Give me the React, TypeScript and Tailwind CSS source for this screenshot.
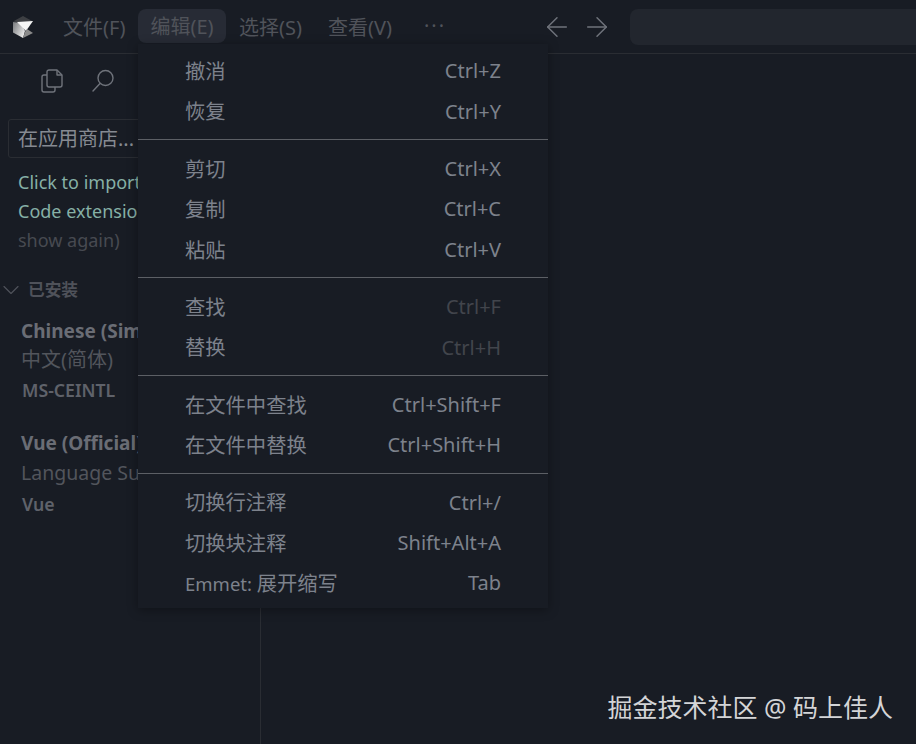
import { ArrowLeft, ArrowRight, ChevronDown } from "lucide-react";

const font = "font-['Noto_Sans','Noto_Sans_CJK_SC',sans-serif]";

type MenuItem = { label: string; keys: string; dim?: boolean; latin?: string };

const menuGroups: MenuItem[][] = [
  [
    { label: "撤消", keys: "Ctrl+Z" },
    { label: "恢复", keys: "Ctrl+Y" },
  ],
  [
    { label: "剪切", keys: "Ctrl+X" },
    { label: "复制", keys: "Ctrl+C" },
    { label: "粘贴", keys: "Ctrl+V" },
  ],
  [
    { label: "查找", keys: "Ctrl+F", dim: true },
    { label: "替换", keys: "Ctrl+H", dim: true },
  ],
  [
    { label: "在文件中查找", keys: "Ctrl+Shift+F" },
    { label: "在文件中替换", keys: "Ctrl+Shift+H" },
  ],
  [
    { label: "切换行注释", keys: "Ctrl+/" },
    { label: "切换块注释", keys: "Shift+Alt+A" },
    { label: "展开缩写", latin: "Emmet: ", keys: "Tab" },
  ],
];

function Logo() {
  return (
    <svg width="22" height="24" viewBox="0 0 22 24">
      <defs>
        <linearGradient id="logoLeft" x1="0" y1="0" x2="1" y2="0.6">
          <stop offset="0" stopColor="#77797c" />
          <stop offset="1" stopColor="#e8e8e8" />
        </linearGradient>
      </defs>
      <path d="M11 1 L21 6.5 L11 8 L1 6.5 Z" fill="#3d3f43" />
      <path d="M1 7 L9 8 L13 16 L11 23 L1 17.5 Z" fill="url(#logoLeft)" />
      <path d="M5 7 L21 6 L14 16 Z" fill="#f5f5f5" />
      <path d="M15 14 L21 18 L11 23 L13 17 Z" fill="#8a8a8a" />
    </svg>
  );
}

function FilesIcon() {
  return (
    <svg width="24" height="24" viewBox="0 0 24 24" fill="none" stroke="#6f737b" strokeWidth="1.4" strokeLinejoin="round">
      <path d="M9 1 H17 L22 6 V16 a2 2 0 0 1 -2 2 H9 a2 2 0 0 1 -2 -2 V3 a2 2 0 0 1 2 -2 Z" />
      <path d="M17 1 V6 H22" />
      <path d="M7 6 H4 a2 2 0 0 0 -2 2 V21 a2 2 0 0 0 2 2 H13 a2 2 0 0 0 2 -2 V18" />
    </svg>
  );
}

function SearchIcon() {
  return (
    <svg width="24" height="24" viewBox="0 0 24 24" fill="none" stroke="#6f737b" strokeWidth="1.4" strokeLinecap="round">
      <circle cx="14.5" cy="9" r="7.5" />
      <path d="M9 14.5 L2 22" />
    </svg>
  );
}

function EditMenu() {
  return (
    <div className="absolute left-[138px] top-[44px] z-10 w-[410px] h-[564px] bg-[#181c24] pt-[7px] shadow-[0_2px_10px_rgba(0,0,0,0.35)]">
      {menuGroups.map((group, i) => (
        <div key={i}>
          {i > 0 && <div className="h-px bg-[#5c5f65] mt-[7px] mb-[9px]" />}
          {group.map((item) => (
            <div key={item.label} className="h-[40.4px] pl-[47px] pr-[47px] flex items-center justify-between">
              <span className="text-[20.3px] text-[#7d828c]">
                {item.latin && <span className="text-[18.5px]">{item.latin}</span>}
                {item.label}
              </span>
              <span className={`text-[20px] ${item.dim ? "text-[#42454c]" : "text-[#7d828c]"}`}>{item.keys}</span>
            </div>
          ))}
        </div>
      ))}
    </div>
  );
}

function Sidebar() {
  return (
    <aside className="w-[261px] shrink-0 border-r border-[#2a2d33] flex flex-col overflow-hidden">
      <div className="flex items-center h-[54px] pl-[40px] gap-[27px]">
        <FilesIcon />
        <SearchIcon />
      </div>
      <div className="mt-[11px] ml-[8px] w-[240px] h-[39px] shrink-0 border border-[#2a2d33] rounded-[3px] flex items-center pl-[9px] text-[20px] text-[#868a92] whitespace-nowrap">
        在应用商店...
      </div>
      <div className="mt-[10px] pl-[18px] text-[18px] leading-[29px] whitespace-nowrap">
        <div className="text-[#86b0a6]">Click to import</div>
        <div className="text-[#86b0a6]">Code extensions</div>
        <div className="text-[#474a51]">show again)</div>
      </div>
      <div className="mt-[23px] h-[24px] pl-[5px] flex items-center text-[#4f525a]">
        <ChevronDown size={28} strokeWidth={1} className="shrink-0 -ml-[8px] mr-[3px]" />
        <span className="text-[16.7px] font-bold">已安装</span>
      </div>
      <div className="mt-[15px] pl-[21px] whitespace-nowrap">
        <div className="text-[19px] font-bold leading-[28px] text-[#6a6d75]">Chinese (Simplified)</div>
        <div className="text-[20px] leading-[29px] text-[#52555c]">中文(简体)</div>
        <div className="text-[17.7px] font-semibold leading-[33px] text-[#5f626a] ml-[1px]">MS-CEINTL</div>
      </div>
      <div className="mt-[22px] pl-[21px] whitespace-nowrap">
        <div className="text-[19px] font-bold leading-[28px] text-[#6a6d75]">Vue (Official)</div>
        <div className="text-[19.5px] leading-[31px] text-[#52555c]">Language Support</div>
        <div className="text-[17.7px] font-semibold leading-[32px] text-[#5f626a] ml-[1px]">Vue</div>
      </div>
    </aside>
  );
}

export default function App() {
  return (
    <div className={`relative w-[916px] h-[744px] overflow-hidden flex flex-col bg-[#181c24] ${font}`}>
      <header className="h-[54px] shrink-0 border-b border-[#2a2d33] flex items-center">
        <div className="w-[47px] pl-[12px] shrink-0">
          <Logo />
        </div>
        <nav className="flex items-center text-[20px] text-[#50535a]">
          <span className="w-[91px] pl-[16px] pt-[2px]">文件(F)</span>
          <span className="w-[88px] h-[34px] rounded-[8px] bg-[#272b35] flex items-center justify-center -translate-y-px pt-[3px]">编辑(E)</span>
          <span className="w-[89px] pl-[13px] pt-[2px]">选择(S)</span>
          <span className="w-[96px] pl-[13px] pt-[2px]">查看(V)</span>
          <span className="w-[40px] pl-[13px] tracking-[2px] -translate-y-[1px]">···</span>
        </nav>
        <div className="flex items-center gap-[8px] ml-[90px] text-[#6f737b]">
          <ArrowLeft size={32} strokeWidth={1.1} />
          <ArrowRight size={32} strokeWidth={1.1} />
        </div>
        <div className="ml-[17px] flex-1 h-[36px] rounded-l-[8px] bg-[#22262e]" />
      </header>
      <main className="flex-1 flex min-h-0">
        <Sidebar />
      </main>
      <EditMenu />
      <div className="absolute right-[23px] bottom-[21px] text-[25px] leading-[32px] text-[#d4d5d7]">掘金技术社区 @ 码上佳人</div>
    </div>
  );
}
